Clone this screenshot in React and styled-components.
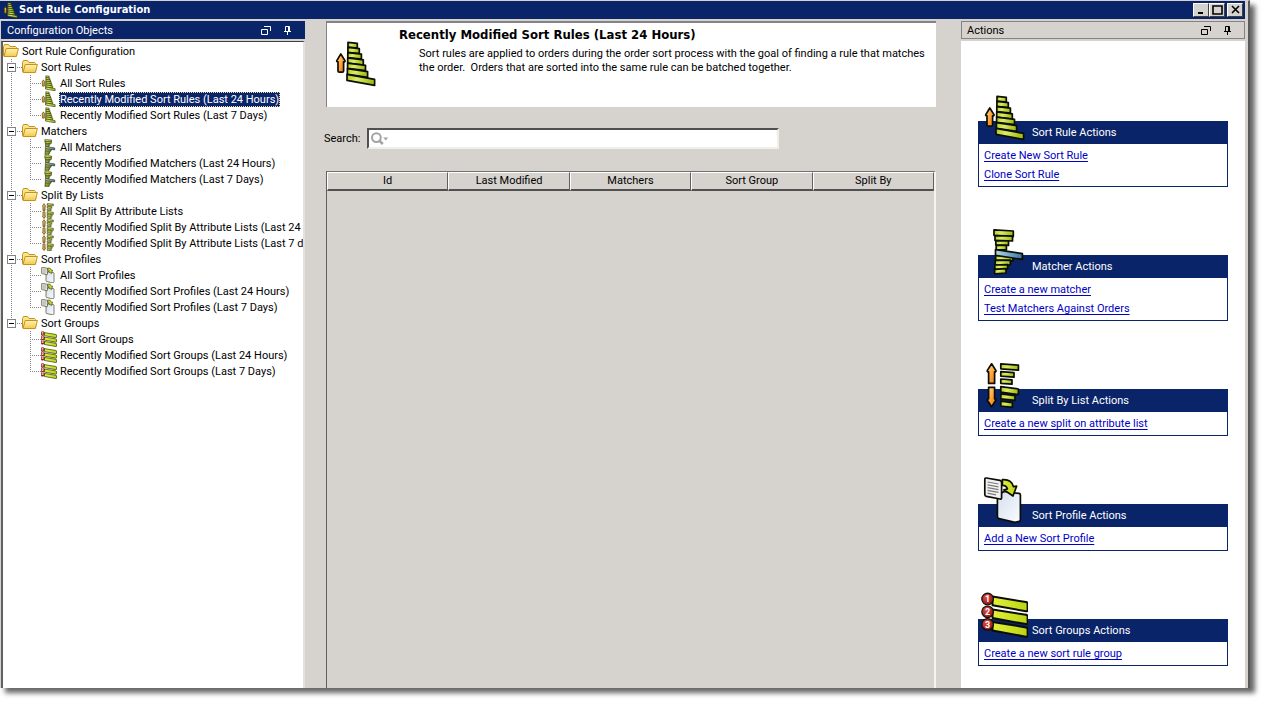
import React from "react";
import styled, { createGlobalStyle, css } from "styled-components";

const navy = "#0a246a";
const face = "#d6d3ce";
const fontStack = 'Roboto, "DejaVu Sans Condensed", sans-serif';
const boldStack = '"DejaVu Sans Condensed", "DejaVu Sans", sans-serif';

const GlobalStyle = createGlobalStyle`
  * { box-sizing: border-box; }
  body { margin: 0; background: #fff; }
  button, input { font: inherit; color: inherit; }
`;

const Page = styled.div`
  min-height: 100vh;
  padding: 0 15px 15px 0;
  display: flex;
  font: 11px/16px ${fontStack};
  color: #000;
`;

const Window = styled.main`
  flex: 1;
  min-width: 0;
  display: flex;
  flex-direction: column;
  background: ${face};
  border-top: 1px solid ${face};
  border-right: 2px solid #5a5a5a;
  box-shadow: 5px 5px 5px rgba(0, 0, 0, 0.6);
`;

const TitleBar = styled.header`
  height: 18px;
  margin-right: 3px;
  padding: 0 2px 0 3px;
  display: flex;
  align-items: center;
  background: ${navy};
  color: #fff;
`;

const WindowTitle = styled.h1`
  flex: 1;
  margin: 0;
  font: bold 11px/18px ${boldStack};
`;

const CaptionButton = styled.button`
  width: 16px;
  height: 14px;
  margin-left: ${(p) => (p.$apart ? "2px" : "0")};
  padding: 0;
  display: grid;
  place-items: center;
  background: ${face};
  border: 1px solid;
  border-color: #fff #404040 #404040 #fff;
`;

const Columns = styled.div`
  flex: 1;
  display: grid;
  grid-template-columns: 304px minmax(0, 1fr) 284px;
  padding: 2px 3px 0 1px;
`;

const Panel = styled.section`
  min-width: 0;
  display: flex;
  flex-direction: column;
`;

const PanelHeader = styled.div`
  height: 18px;
  padding: 1px 12px 0 5px;
  display: flex;
  align-items: center;
  gap: 12px;
  border: 1px solid ${(p) => (p.$active ? navy : "#848284")};
  background: ${(p) => (p.$active ? navy : face)};
  color: ${(p) => (p.$active ? "#fff" : "#000")};
`;

const PanelTitle = styled.h2`
  flex: 1;
  margin: 0;
  font: inherit;
`;

const HeaderButton = styled.button`
  padding: 0;
  display: block;
  border: 0;
  background: none;
  svg { display: block; }
`;

/* Tree */

const Tree = styled.nav`
  flex: 1;
  margin-top: 2px;
  padding-top: 1px;
  overflow: hidden;
  background: #fff;
  border: solid;
  border-width: 1px 2px 0 2px;
  border-color: #404040 #e4e2dc #404040 #606060;
  ul { margin: 0; padding: 0; list-style: none; }
`;

const TreeRow = styled.div`
  height: 16px;
  display: flex;
  align-items: center;
  white-space: nowrap;
  svg { flex: none; }
`;

const dotsDown = "repeating-linear-gradient(to bottom, #848284 0 1px, transparent 1px 2px)";
const dotsAcross = "repeating-linear-gradient(to right, #848284 0 1px, transparent 1px 2px)";

const Guide = styled.span`
  flex: none;
  width: 19px;
  height: 16px;
  display: flex;
  align-items: center;
  padding-left: 4px;
  background-repeat: no-repeat;
  ${(p) => p.$kind === "through" && css`
    background-image: ${dotsDown};
    background-size: 1px 100%;
    background-position: 8px 0;
  `}
  ${(p) => p.$kind === "tee" && css`
    background-image: ${dotsDown}, ${dotsAcross};
    background-size: 1px 100%, 11px 1px;
    background-position: 8px 0, 8px 8px;
  `}
  ${(p) => p.$kind === "end" && css`
    background-image: ${dotsDown}, ${dotsAcross};
    background-size: 1px 8px, 11px 1px;
    background-position: 8px 0, 8px 8px;
  `}
`;

const Expander = styled.button`
  width: 9px;
  height: 9px;
  padding: 0;
  display: grid;
  place-items: center;
  background: #fff;
  border: 1px solid #848284;
  &::before { content: ""; width: 5px; height: 1px; background: #000; }
`;

const NodeLabel = styled.a`
  margin-left: 2px;
  padding: 0 1px;
  line-height: 15px;
  color: ${(p) => (p.$selected ? "#fff" : "#000")};
  background: ${(p) => (p.$selected ? navy : "transparent")};
  outline: ${(p) => (p.$selected ? "1px dotted #f5db95" : "0")};
  outline-offset: -1px;
  text-decoration: none;
`;

/* Centre */

const Content = styled.section`
  min-width: 0;
  padding: 0 25px 0 19px;
  display: flex;
  flex-direction: column;
`;

const Intro = styled.div`
  height: 86px;
  margin-left: 2px;
  padding: 4px 8px 0 4px;
  display: flex;
  background: #fff;
  border: solid #848284;
  border-width: 2px 0 0 1px;
  svg { flex: none; margin-top: 12px; }
`;

const IntroText = styled.div`
  margin-left: 20px;
`;

const IntroTitle = styled.h2`
  margin: 0;
  font: bold 13px/16px ${boldStack};
`;

const IntroBody = styled.p`
  margin: 4px 0 0 20px;
  line-height: 14px;
`;

const SearchRow = styled.div`
  margin: 21px 0 22px;
  display: flex;
  align-items: center;
  label { flex: none; width: 43px; }
`;

const SearchBox = styled.div`
  flex: 0 1 412px;
  height: 21px;
  padding: 0 2px;
  display: flex;
  align-items: center;
  background: #fff;
  border: solid;
  border-width: 2px;
  border-color: #505050 #f1efea #f1efea #505050;
  svg { flex: none; }
`;

const SearchInput = styled.input`
  flex: 1;
  min-width: 0;
  padding: 0 4px;
  border: 0;
  outline: 0;
  background: transparent;
`;

const TableFrame = styled.div`
  flex: 1;
  margin-left: 2px;
  border: solid;
  border-width: 1px 2px 0 1px;
  border-color: #707070 #f4f3ef #707070 #606060;
`;

const Grid = styled.table`
  width: 100%;
  table-layout: fixed;
  border-collapse: separate;
  border-spacing: 0;
`;

const ColumnHead = styled.th`
  height: 19px;
  padding: 0;
  font-weight: normal;
  line-height: 16px;
  border: solid;
  border-width: 1px 1px 2px 1px;
  border-color: #fff #606060 #505050 #fff;
`;

/* Actions */

const ActionList = styled.div`
  flex: 1;
  margin-top: 2px;
  padding: 80px 17px 22px;
  display: flex;
  flex-direction: column;
  gap: 68px;
  background: #fff;
`;

const ActionBox = styled.section`
  border: 1px solid ${navy};
  border-top: 0;
`;

const ActionTitle = styled.h3`
  height: 23px;
  margin: 0;
  padding-left: 1px;
  display: flex;
  align-items: flex-end;
  gap: 4px;
  background: ${navy};
  color: #fff;
  font: 11px/23px ${fontStack};
  svg { flex: none; margin-bottom: 3px; }
`;

const ActionLinks = styled.ul`
  margin: 0;
  padding: 2px 5px;
  list-style: none;
`;

const ActionItem = styled.li`
  height: 19px;
  line-height: 19px;
`;

const ActionLink = styled.a`
  color: #0000c6;
  text-decoration: underline 1px;
  text-underline-offset: 2px;
  text-decoration-skip-ink: none;
`;

/* Drawings */

const Defs = styled.svg`
  position: absolute;
`;

function SharedPaint() {
  return (
    <Defs width="0" height="0" aria-hidden="true">
      <defs>
        <linearGradient id="green" x1="0" y1="0" x2="1" y2="0.3">
          <stop offset="0" stopColor="#a9c61c" />
          <stop offset="0.45" stopColor="#dcec66" />
          <stop offset="1" stopColor="#a3c018" />
        </linearGradient>
        <linearGradient id="lime" x1="0" y1="0" x2="1" y2="0">
          <stop offset="0" stopColor="#e2f03c" />
          <stop offset="1" stopColor="#b9d414" />
        </linearGradient>
        <linearGradient id="orange" x1="0" y1="0" x2="1" y2="1">
          <stop offset="0" stopColor="#ffe0a0" />
          <stop offset="0.5" stopColor="#ffa53a" />
          <stop offset="1" stopColor="#e8780a" />
        </linearGradient>
        <linearGradient id="blue" x1="0" y1="0" x2="1" y2="0">
          <stop offset="0" stopColor="#b5d8ea" />
          <stop offset="1" stopColor="#3878a4" />
        </linearGradient>
        <linearGradient id="paper" x1="0" y1="0" x2="1" y2="1">
          <stop offset="0" stopColor="#d4dfee" />
          <stop offset="1" stopColor="#fafcff" />
        </linearGradient>
        <radialGradient id="red" cx="0.4" cy="0.35" r="0.7">
          <stop offset="0" stopColor="#e05048" />
          <stop offset="1" stopColor="#8c1010" />
        </radialGradient>
        <linearGradient id="folder" x1="0" y1="0" x2="0" y2="1">
          <stop offset="0" stopColor="#fff3b0" />
          <stop offset="1" stopColor="#f5c94e" />
        </linearGradient>
      </defs>
    </Defs>
  );
}

/* Each bar is [left, right, top, height, drop towards the right]. */
function Bars({ rows, fill = "url(#green)" }) {
  return rows.map(([x1, x2, y, h, drop], i) => (
    <path key={i} fill={fill} d={`M${x1} ${y}L${x2} ${y + drop}V${y + drop + h}L${x1} ${y + h}Z`} />
  ));
}

const sortRows = [
  [17, 26.3, 3.4, 4.8, 1], [16.9, 28.3, 8.4, 5, 1.2], [16.8, 30.4, 13.6, 5, 1.6], [16.7, 32.3, 18.8, 5.2, 2],
  [16.6, 34.5, 24.2, 5.2, 2.2], [16.4, 36.6, 29.6, 5.8, 3], [16, 43.6, 35.4, 6, 5],
];
const matchTop = [[14, 33.3, 2.8, 5.6, 1.2], [15, 32.5, 8.6, 4.8, 0.6], [15.8, 28.5, 13.6, 4.4, 0.4], [16.2, 26.4, 18.2, 4.4, 0.2]];
const matchBottom = [[15.6, 33, 28.2, 5, 0.6], [15.2, 30.4, 33.4, 4.6, -0.2], [14.8, 27.6, 38, 4.4, -0.4], [14.6, 26, 42.4, 4.4, -0.8]];
const splitRows = [
  [20.8, 38.4, 2.8, 5, 1.4], [20.8, 34, 10.6, 4.6, 1], [20.8, 32, 18, 4.4, 0.8],
  [20.8, 38.4, 25.6, 5.6, 2.4], [20.8, 35, 33, 4.8, 1.6], [20.8, 32.4, 40.2, 4.8, 1.4],
];

function Art({ kind }) {
  if (kind === "sort")
    return (
      <>
        <path fill="url(#orange)" d="M9.8 15L14 21.6Q14.4 22.8 12.6 22.8V32Q12.6 33.2 11.4 33.2H8.2Q7 33.2 7 32V22.8Q5.2 22.8 5.8 21.6Z" />
        <Bars rows={sortRows} />
      </>
    );
  if (kind === "match")
    return (
      <>
        <Bars rows={matchTop} />
        <Bars rows={matchBottom} />
        <Bars rows={[[15.5, 42.4, 22.6, 5.8, 4]]} fill="url(#blue)" />
      </>
    );
  if (kind === "split")
    return (
      <>
        <path fill="url(#orange)" d="M11.6 2.8L16 9.6Q16.2 10.8 14.6 10.8V22.4H8.6V10.8Q7 10.8 7.2 9.6Z" />
        <path fill="url(#orange)" d="M11.6 45.8L16 39Q16.2 37.8 14.6 37.8V26.4H8.6V37.8Q7 37.8 7.2 39Z" />
        <Bars rows={splitRows} />
      </>
    );
  if (kind === "profile")
    return (
      <>
        <path fill="url(#paper)" d="M17.4 21Q17 20 18 19L24 15.5L39 17.4Q40.6 17.8 40.4 19.4V43.6Q40.4 45 39 45.4L35 46.4L19 42.6Q17.4 42.2 17.4 40.6Z" />
        <path fill="#f2f2f2" d="M6.4 2L20 4.4Q21.6 4.8 21.6 6.4V21.4Q21.6 23.4 20 23L6.4 20.4Q4.8 20 4.8 18.4V3.4Q4.8 1.8 6.4 2Z" />
        <path fill="none" stroke="#7c7c7c" strokeWidth="1.2" d="M7.5 6L18.5 8M7.5 8.8L18.5 10.8M7.5 11.6L18.5 13.6M7.5 14.4L18.5 16.4M7.5 17.2L16 18.8" />
        <path fill="url(#lime)" d="M22.4 3.6Q31.6 3 33.4 10.6L36.6 10.2L33 20L23.8 13.8L27.4 13Q26.6 9.4 22.4 9.4Z" />
      </>
    );
  return [0, 12.8, 25.4].map((dy, i) => (
    <g key={i} transform={`translate(0 ${dy})`}>
      <path fill="url(#lime)" strokeWidth="2" d="M12.5 5.6L46 11Q47.8 11.4 47.6 13V19Q47.6 20.6 46 20.3L12.5 14.2Z" />
      <circle cx="7.6" cy="8" r="5.8" fill="url(#red)" strokeWidth="1.2" />
      <text x="7.6" y="11.2" textAnchor="middle" fontSize="9" fontWeight="bold" fill="#fff" stroke="none">{i + 1}</text>
    </g>
  ));
}

function ObjectIcon({ kind, size = 48 }) {
  const small = size < 20;
  return (
    <svg width={size} height={size} viewBox={small ? "3 1 46 46" : "0 0 48 48"} stroke={small ? "#33380c" : "#0c0e04"}
      strokeWidth={small ? 1.8 : 1.7} strokeLinejoin="round" aria-hidden="true">
      <Art kind={kind} />
    </svg>
  );
}

function FolderIcon() {
  return (
    <svg width="16" height="16" viewBox="0 0 16 16" strokeLinejoin="round" aria-hidden="true">
      <path d="M0.5 12.5V3.5L1.5 1.5H5.5L7 3.5H12.5L13.5 4.5V12.5Z" fill="#fbe38c" stroke="#c3921f" />
      <path d="M1 13.5L3.2 5.5H15.4L13.4 13.5Z" fill="url(#folder)" stroke="#c3921f" />
    </svg>
  );
}

function RestoreIcon() {
  return (
    <svg width="11" height="10" viewBox="0 0 11 10" fill="none" stroke="currentColor" aria-hidden="true">
      <path d="M0.5 3.5H6.5V8.5H0.5ZM3 0.5H9.5V5" />
    </svg>
  );
}

function PinIcon() {
  return (
    <svg width="8" height="10" viewBox="0 0 8 10" fill="none" stroke="currentColor" aria-hidden="true">
      <path d="M1.5 5V0.5H5.5V5M0 5.5H7M3.5 6V9M4.5 1V5" />
    </svg>
  );
}

function SearchIcon() {
  return (
    <svg width="18" height="16" viewBox="0 0 18 16" fill="none" stroke="#a5a2a5" strokeWidth="2" aria-hidden="true">
      <circle cx="5.4" cy="6.6" r="4.4" />
      <path d="M8.6 9.8L11.8 13" strokeWidth="2.6" />
      <path d="M12.2 6.5H17.2L14.7 9.5Z" fill="#a5a2a5" stroke="none" />
    </svg>
  );
}

const captionPaths = { Minimize: "M3 9H8", Maximize: "M2 2H11V10H2Z", Close: "M3 2L10 9M10 2L3 9" };

function Caption({ name, apart }) {
  return (
    <CaptionButton type="button" aria-label={name} $apart={apart}>
      <svg width="13" height="12" viewBox="0 0 13 12" fill="none" stroke="#000" strokeWidth={name === "Minimize" ? 2 : 1.6} aria-hidden="true">
        <path d={captionPaths[name]} />
      </svg>
    </CaptionButton>
  );
}

function PanelBar({ title, active }) {
  return (
    <PanelHeader $active={active}>
      <PanelTitle>{title}</PanelTitle>
      <HeaderButton type="button" aria-label={`Float ${title}`}><RestoreIcon /></HeaderButton>
      <HeaderButton type="button" aria-label={`Pin ${title}`}><PinIcon /></HeaderButton>
    </PanelHeader>
  );
}

const groups = [
  { name: "Sort Rules", icon: "sort", items: ["All Sort Rules", "Recently Modified Sort Rules (Last 24 Hours)", "Recently Modified Sort Rules (Last 7 Days)"] },
  { name: "Matchers", icon: "match", items: ["All Matchers", "Recently Modified Matchers (Last 24 Hours)", "Recently Modified Matchers (Last 7 Days)"] },
  { name: "Split By Lists", icon: "split", items: ["All Split By Attribute Lists", "Recently Modified Split By Attribute Lists (Last 24 Hours)", "Recently Modified Split By Attribute Lists (Last 7 days)"] },
  { name: "Sort Profiles", icon: "profile", items: ["All Sort Profiles", "Recently Modified Sort Profiles (Last 24 Hours)", "Recently Modified Sort Profiles (Last 7 Days)"] },
  { name: "Sort Groups", icon: "group", items: ["All Sort Groups", "Recently Modified Sort Groups (Last 24 Hours)", "Recently Modified Sort Groups (Last 7 Days)"] },
];

const selected = "Recently Modified Sort Rules (Last 24 Hours)";

const actions = [
  { title: "Sort Rule Actions", icon: "sort", links: ["Create New Sort Rule", "Clone Sort Rule"] },
  { title: "Matcher Actions", icon: "match", links: ["Create a new matcher", "Test Matchers Against Orders"] },
  { title: "Split By List Actions", icon: "split", links: ["Create a new split on attribute list"] },
  { title: "Sort Profile Actions", icon: "profile", links: ["Add a New Sort Profile"] },
  { title: "Sort Groups Actions", icon: "group", links: ["Create a new sort rule group"] },
];

function ObjectTree() {
  return (
    <Tree aria-label="Configuration Objects">
      <TreeRow><FolderIcon /><NodeLabel href="#root-node">Sort Rule Configuration</NodeLabel></TreeRow>
      <ul>
        {groups.map((group, g) => {
          const last = g === groups.length - 1;
          return (
            <li key={group.name}>
              <TreeRow>
                <Guide $kind={last ? "end" : "tee"}><Expander type="button" aria-label={`Collapse ${group.name}`} /></Guide>
                <FolderIcon />
                <NodeLabel href="#group">{group.name}</NodeLabel>
              </TreeRow>
              <ul>
                {group.items.map((item, i) => (
                  <li key={item}>
                    <TreeRow>
                      <Guide $kind={last ? "none" : "through"} />
                      <Guide $kind={i === group.items.length - 1 ? "end" : "tee"} />
                      <ObjectIcon kind={group.icon} size={16} />
                      <NodeLabel href="#item" $selected={item === selected}>{item}</NodeLabel>
                    </TreeRow>
                  </li>
                ))}
              </ul>
            </li>
          );
        })}
      </ul>
    </Tree>
  );
}

export default function App() {
  return (
    <Page>
      <GlobalStyle />
      <SharedPaint />
      <Window>
        <TitleBar>
          <ObjectIcon kind="sort" size={16} />
          <WindowTitle>Sort Rule Configuration</WindowTitle>
          <Caption name="Minimize" />
          <Caption name="Maximize" />
          <Caption name="Close" apart />
        </TitleBar>
        <Columns>
          <Panel>
            <PanelBar title="Configuration Objects" active />
            <ObjectTree />
          </Panel>
          <Content>
            <Intro>
              <ObjectIcon kind="sort" />
              <IntroText>
                <IntroTitle>Recently Modified Sort Rules (Last 24 Hours)</IntroTitle>
                <IntroBody>
                  Sort rules are applied to orders during the order sort process with the goal of finding a rule that matches
                  <br />
                  the order.&nbsp; Orders that are sorted into the same rule can be batched together.
                </IntroBody>
              </IntroText>
            </Intro>
            <SearchRow>
              <label htmlFor="search">Search:</label>
              <SearchBox>
                <SearchIcon />
                <SearchInput id="search" type="text" />
              </SearchBox>
            </SearchRow>
            <TableFrame>
              <Grid>
                <thead>
                  <tr>
                    {["Id", "Last Modified", "Matchers", "Sort Group", "Split By"].map((name) => (
                      <ColumnHead key={name} scope="col">{name}</ColumnHead>
                    ))}
                  </tr>
                </thead>
                <tbody />
              </Grid>
            </TableFrame>
          </Content>
          <Panel>
            <PanelBar title="Actions" />
            <ActionList>
              {actions.map((box) => (
                <ActionBox key={box.title}>
                  <ActionTitle><ObjectIcon kind={box.icon} />{box.title}</ActionTitle>
                  <ActionLinks>
                    {box.links.map((text) => (
                      <ActionItem key={text}><ActionLink href="#action">{text}</ActionLink></ActionItem>
                    ))}
                  </ActionLinks>
                </ActionBox>
              ))}
            </ActionList>
          </Panel>
        </Columns>
      </Window>
    </Page>
  );
}
